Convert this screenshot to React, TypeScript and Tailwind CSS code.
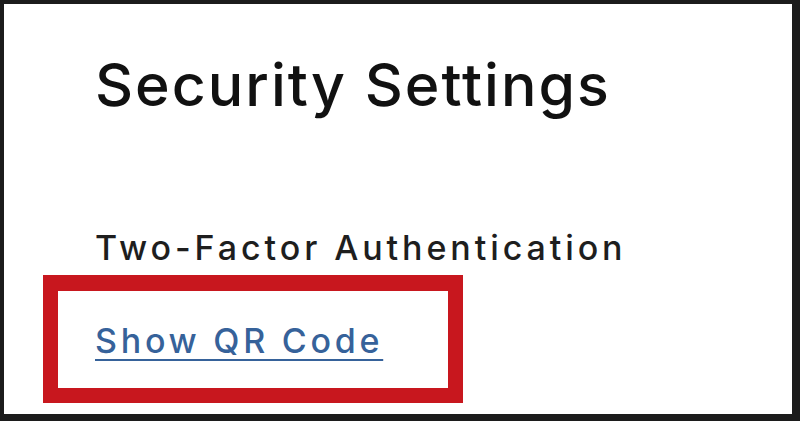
export default function App() {
  return (
    <div className="w-[800px] h-[421px] bg-white border-t-[4px] border-l-[4px] border-r-[8px] border-b-[7px] border-[#1c1c1c] overflow-hidden font-['Inter',sans-serif]">
      <div className="pl-[39px] pt-[51px]">
        <h1 className="pl-[52px] text-[59px] leading-none font-medium tracking-[0.034em] text-[#111111]">
          Security Settings
        </h1>
        <p className="pl-[52px] mt-[117px] text-[34px] leading-none font-medium tracking-[0.115em] text-[#1e1e1e]">
          Two-Factor Authentication
        </p>
        <div className="mt-[10px] w-[420px] border-[15px] border-t-[16px] border-[#c8171e] pl-[37px] pt-[33px] pb-[30px]">
          <a
            href="#"
            className="block text-[34px] leading-none font-medium tracking-[0.11em] text-[#36629a] underline underline-offset-[6px] decoration-[2px]"
          >
            Show QR Code
          </a>
        </div>
      </div>
    </div>
  );
}
